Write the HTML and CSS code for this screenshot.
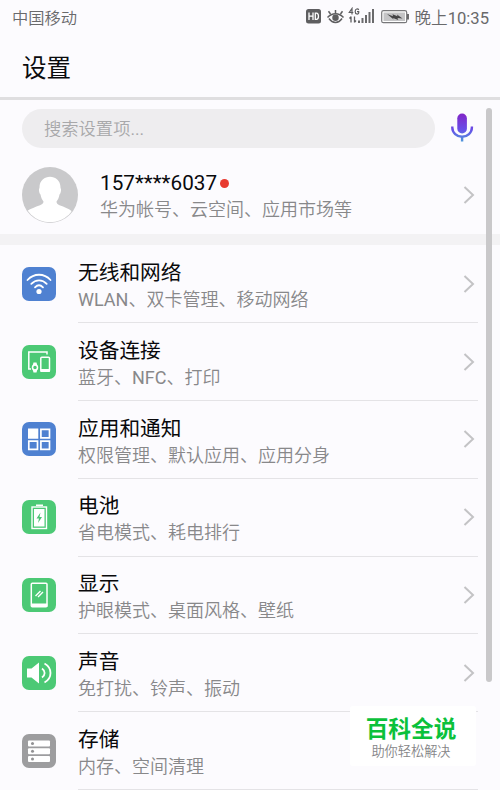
FILE: index.html
```
<!DOCTYPE html>
<html lang="zh-CN">
<head>
<meta charset="utf-8">
<title>设置</title>
<link rel="stylesheet" href="styles.css">
</head>
<body>
<div class="phone">
  <header class="status">
    <span class="carrier">中国移动</span>
    <svg class="status-icons" width="104" height="20" viewBox="0 0 104 20">
      <rect x="1" y="2" width="15" height="14.5" rx="2.5" fill="#5e5e60"/>
      <path d="M4 5.5v7.5M8 5.5v7.5M4 9.2h4M10.3 6.2v6.2h1.2c2.6 0 2.6-6.2 0-6.2z" fill="none" stroke="#fff" stroke-width="1.3"/>
      <g fill="none" stroke="#5e5e60" stroke-width="1.5">
        <path d="M22.500 10.500c4.500-5 11.500-5 16 0M24 11.500c3.500 5.200 9.500 5.200 13 0M30.500 6V3M25.500 7l-2-2.700M35.500 7l2-2.700"/>
        <circle cx="30.500" cy="10.800" r="2.500" fill="#5e5e60"/>
      </g>
      <path d="M47 7.500V1.500l-2.700 4h4M53.700 3c-.6-1.600-3.500-1.600-3.500 1.500s3 3 3.500 1.500V4.700h-1.700" fill="none" stroke="#5e5e60" stroke-width="1.200"/>
      <path d="M46 9.500v6M44.500 11.500L46 9.700M49.500 9.500v6M51 13.500l-1.500 1.800" fill="none" stroke="#5e5e60" stroke-width="1.300"/>
      <path d="M54 13.500V16M57.500 11v5M61 8v8M64.500 5v11M68 2v14" stroke="#6a6a6c" stroke-width="2"/>
      <rect x="76.700" y="3.700" width="25" height="12" rx="1.800" fill="#fff" stroke="#77777a" stroke-width="1.200"/>
      <path d="M78.500 5.500h21.500v8.500H78.500z" fill="#c4c4c6"/>
      <path d="M103 7v5.500" stroke="#5e5e60" stroke-width="1.800"/>
      <path d="M82 7l6 2.200-.5-2 5 2-.5-1.700 5.500 4-5-.6.8 2-5.300-2 .7 1.500z" fill="#444446"/>
    </svg>
    <span class="clock">晚上<span class="latin">10:35</span></span>
  </header>
  <h1 class="heading">设置</h1>
  <div class="search-row">
    <div class="search">搜索设置项<span class="latin">...</span></div>
    <svg class="mic" width="24" height="32" viewBox="0 0 24 32">
      <defs><linearGradient id="voice" gradientUnits="userSpaceOnUse" x1="0" y1="2" x2="0" y2="31"><stop offset="0" stop-color="#8126c8"/><stop offset=".55" stop-color="#6750e8"/><stop offset="1" stop-color="#4ba0d8"/></linearGradient></defs>
      <rect x="7.300" y="1.500" width="9.600" height="20" rx="4.800" fill="url(#voice)"/>
      <path d="M2.300 14.500v1a9.800 9.300 0 0 0 19.600 0v-1M12.100 25v4.500" fill="none" stroke="url(#voice)" stroke-width="2.400"/>
    </svg>
  </div>
  <section class="account">
    <svg class="avatar" width="56" height="56" viewBox="0 0 56 56">
      <defs><clipPath id="face"><circle cx="28" cy="28" r="27.300"/></clipPath></defs>
      <circle cx="28" cy="28" r="28" fill="#c9c9cb"/>
      <path clip-path="url(#face)" d="M17.500 21C17 6 39 6 38.500 21c1 1 .5 5-1 6.500-.5 3-1.500 5-3 7 0 2 1 3 3 3.700 5 1.800 9 3.300 12 5.800V58H5V44c4-2.500 8-4 13-5.800 2-.7 3.500-1.700 3.500-3.700-1.500-2-2.500-4-3-7-1.500-1.500-2-5.500-1-6.500z" fill="#fff"/>
    </svg>
    <div class="text"><div class="title">157****6037<i class="dot"></i></div><div class="sub">华为帐号、云空间、应用市场等</div></div>
    <svg class="chevron" width="12" height="20" viewBox="0 0 12 20"><path d="M1.500 2l8.500 8-8.500 8"/></svg>
  </section>
  <main class="list">
    <section class="row">
      <svg class="icon blue" width="34" height="34" viewBox="0 0 34 34"><g fill="none" stroke="#fff" stroke-width="1.800" stroke-linecap="round"><path d="M5.500 13c6.500-7 16.500-7 23 0M9.300 16.800c4.500-4.700 11-4.700 15.400 0M13 20.300c2.500-2.500 5.500-2.500 8 0"/></g><circle cx="17" cy="24.500" r="2.600" fill="#fff"/></svg>
      <div class="text"><div class="title">无线和网络</div><div class="sub"><span class="latin">WLAN</span>、双卡管理、移动网络</div></div>
      <svg class="chevron" width="12" height="20" viewBox="0 0 12 20"><path d="M1.500 2l8.500 8-8.500 8"/></svg>
    </section>
    <section class="row">
      <svg class="icon green" width="34" height="34" viewBox="0 0 34 34"><g fill="none" stroke="#fff" stroke-width="1.500"><path d="M9 24H6.800V7H25v2.500"/><rect x="18.800" y="12.300" width="8.700" height="14" rx="1"/><circle cx="13" cy="22.500" r="2.500"/></g><path d="M11.500 17.500h3l.7 2.500h-4.400zM10.800 25h4.400l-.7 2.500h-3zM18.500 24h9.300v3h-9.300z" fill="#fff"/></svg>
      <div class="text"><div class="title">设备连接</div><div class="sub">蓝牙、<span class="latin">NFC</span>、打印</div></div>
      <svg class="chevron" width="12" height="20" viewBox="0 0 12 20"><path d="M1.500 2l8.500 8-8.500 8"/></svg>
    </section>
    <section class="row">
      <svg class="icon blue" width="34" height="34" viewBox="0 0 34 34"><path d="M6 6.500h10.300v10.300H6z" fill="#fff"/><g fill="none" stroke="#fff" stroke-width="1.700"><path d="M18.900 7.300h8.600v8.600h-8.600zM6.800 19.200h8.700v8.200H6.800zM18.900 19.200h8.600v8.200h-8.600z"/></g></svg>
      <div class="text"><div class="title">应用和通知</div><div class="sub">权限管理、默认应用、应用分身</div></div>
      <svg class="chevron" width="12" height="20" viewBox="0 0 12 20"><path d="M1.500 2l8.500 8-8.500 8"/></svg>
    </section>
    <section class="row">
      <svg class="icon green" width="34" height="34" viewBox="0 0 34 34"><path d="M14 4.500h7V6h-7z" fill="#fff"/><rect x="10" y="7" width="14.500" height="21.500" fill="none" stroke="#fff" stroke-width="1.400"/><path d="M12 9h10.500v17.500H12z" fill="#fff"/><path d="M18.500 12.500l-4 6h2.500l-1 4.500 4-6h-2.500z" fill="#4cc273"/></svg>
      <div class="text"><div class="title">电池</div><div class="sub">省电模式、耗电排行</div></div>
      <svg class="chevron" width="12" height="20" viewBox="0 0 12 20"><path d="M1.500 2l8.500 8-8.500 8"/></svg>
    </section>
    <section class="row">
      <svg class="icon green" width="34" height="34" viewBox="0 0 34 34"><rect x="9.300" y="5.300" width="15.700" height="23.500" rx="1" fill="none" stroke="#fff" stroke-width="1.500"/><path d="M9 25.500h16.300V29H9z" fill="#fff"/><path d="M13.500 18l5-5M16 19l5-5" stroke="#fff" stroke-width="1.400"/></svg>
      <div class="text"><div class="title">显示</div><div class="sub">护眼模式、桌面风格、壁纸</div></div>
      <svg class="chevron" width="12" height="20" viewBox="0 0 12 20"><path d="M1.500 2l8.500 8-8.500 8"/></svg>
    </section>
    <section class="row">
      <svg class="icon green" width="34" height="34" viewBox="0 0 34 34"><path d="M5 12.500h4.500l7.500-6v21l-7.500-6H5z" fill="#fff"/><path d="M20 12.500c3.500 2.500 3.500 6.500 0 9M22.500 7.500c8 4.500 8 14.500 0 19" fill="none" stroke="#fff" stroke-width="1.800"/></svg>
      <div class="text"><div class="title">声音</div><div class="sub">免打扰、铃声、振动</div></div>
      <svg class="chevron" width="12" height="20" viewBox="0 0 12 20"><path d="M1.500 2l8.500 8-8.500 8"/></svg>
    </section>
    <section class="row">
      <svg class="icon gray" width="34" height="34" viewBox="0 0 34 34"><g fill="#fff"><rect x="6" y="6.500" width="22" height="6" rx="1"/><rect x="6" y="14.200" width="22" height="6" rx="1"/><rect x="6" y="21.900" width="22" height="6" rx="1"/></g><g fill="#929294"><circle cx="10.500" cy="9.500" r="1.500"/><circle cx="10.500" cy="17.200" r="1.500"/><circle cx="10.500" cy="24.900" r="1.500"/></g></svg>
      <div class="text"><div class="title">存储</div><div class="sub">内存、空间清理</div></div>
    </section>
  </main>
  <div class="scrollbar"></div>
  <aside class="badge"><strong>百科全说</strong><span>助你轻松解决</span></aside>
</div>
</body>
</html>
```
FILE: styles.css
```
* { box-sizing: border-box; }
body { margin: 0; background: #fcfbfe; font-family: Roboto, "Noto Sans CJK SC", sans-serif; }
.phone { position: relative; width: 500px; height: 790px; overflow: hidden; }
.status { display: flex; align-items: center; height: 35px; padding: 0 11px 1px 12px; color: #69696b; font-size: 16.3px; }
.carrier { margin-right: auto; font-weight: 350; }
.status-icons { margin-right: 5px; }
.clock { font-size: 16.6px; font-weight: 350; white-space: nowrap; }
.latin { font-weight: 400; }
.heading { margin: 0; height: 65px; padding: 16px 22px 0; border-bottom: 3px solid #dfdee0; font-size: 24.5px; line-height: 36px; font-weight: 400; color: #0b0b0d; }
.search-row { display: flex; align-items: center; height: 56px; padding: 0 26px 0 22px; gap: 15px; }
.search { width: 413px; height: 39px; border-radius: 20px; background: #eeedef; padding: 1px 0 0 22px; font-size: 17.300px; line-height: 39px; color: #a8a8aa; font-weight: 350; }
.mic { flex: none; }
.account { display: flex; align-items: center; height: 88.700px; padding: 0 25px 0 22px; border-bottom: 11px solid #f3f2f4; }
.avatar { margin-right: 22px; flex: none; }
.text { flex: 1; padding-top: 4px; white-space: nowrap; }
.title { font-size: 20.700px; line-height: 27px; color: #09090b; }
.sub { font-size: 18px; line-height: 26px; color: #88888a; font-weight: 350; }
.dot { display: inline-block; width: 9px; height: 9px; margin-left: 3px; border-radius: 50%; background: #e83a30; vertical-align: 2px; }
.chevron { flex: none; fill: none; stroke: #c3c3c5; stroke-width: 2; }
.list { margin-top: .4px; }
.row { display: flex; align-items: center; position: relative; height: 77.800px; padding: 0 25px .5px 22px; }
.row .text { padding-top: 5.600px; }
.row::after { content: ""; position: absolute; left: 78px; right: 22px; bottom: -.3px; height: 1px; background: #e4e3e6; }
.icon { flex: none; margin-right: 22px; border-radius: 7px; }
.blue { background: #4f81d1; }
.green { background: #4cc975; }
.gray { background: #9d9d9f; }
.scrollbar { position: absolute; left: 486px; top: 108px; width: 6px; height: 574px; border-radius: 3px; background: #c9c8ca; }
.badge { position: absolute; left: 350px; top: 706px; width: 126px; height: 60px; padding-top: 10px; background: #fff; border-radius: 3px; text-align: center; }
.badge strong { display: block; margin-left: -4px; font-size: 22.700px; line-height: 28px; font-weight: 700; color: #0bc13b; }
.badge span { display: block; font-size: 13.200px; line-height: 15px; font-weight: 350; color: #858587; margin-left: -4px; }
```
